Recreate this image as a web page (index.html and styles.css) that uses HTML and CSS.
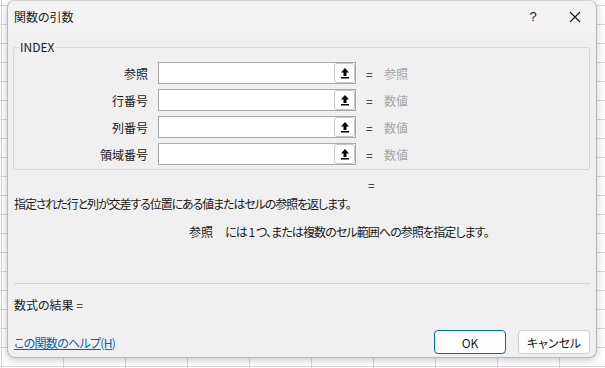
FILE: index.html
```
<!DOCTYPE html>
<html lang="ja">
<head>
<meta charset="utf-8">
<title>関数の引数</title>
<link rel="stylesheet" href="styles.css">
</head>
<body>
<div class="dialog">
	<div class="titlebar">
		<span class="title">関数の引数</span>
		<span class="help">?</span>
		<span class="close"><svg width="12" height="12" viewBox="0 0 12 12"><path d="M1 1L11 11M11 1L1 11" stroke="#1a1a1a" stroke-width="1.1" fill="none"/></svg></span>
	</div>
	<div class="content">
		<fieldset class="group">
			<legend>INDEX</legend>
			<div class="row">
				<label>参照</label>
				<div class="field"><span class="pick"><svg width="10" height="12" viewBox="0 0 10 12"><path d="M5 1L1 5.5H3.5V9H6.5V5.5H9Z" fill="#000"/><rect x="1" y="10" width="8" height="1.5" fill="#000"/></svg></span></div>
				<span class="eq">=</span>
				<span class="val">参照</span>
			</div>
			<div class="row">
				<label>行番号</label>
				<div class="field"><span class="pick"><svg width="10" height="12" viewBox="0 0 10 12"><path d="M5 1L1 5.5H3.5V9H6.5V5.5H9Z" fill="#000"/><rect x="1" y="10" width="8" height="1.5" fill="#000"/></svg></span></div>
				<span class="eq">=</span>
				<span class="val">数値</span>
			</div>
			<div class="row">
				<label>列番号</label>
				<div class="field"><span class="pick"><svg width="10" height="12" viewBox="0 0 10 12"><path d="M5 1L1 5.5H3.5V9H6.5V5.5H9Z" fill="#000"/><rect x="1" y="10" width="8" height="1.5" fill="#000"/></svg></span></div>
				<span class="eq">=</span>
				<span class="val">数値</span>
			</div>
			<div class="row">
				<label>領域番号</label>
				<div class="field"><span class="pick"><svg width="10" height="12" viewBox="0 0 10 12"><path d="M5 1L1 5.5H3.5V9H6.5V5.5H9Z" fill="#000"/><rect x="1" y="10" width="8" height="1.5" fill="#000"/></svg></span></div>
				<span class="eq">=</span>
				<span class="val">数値</span>
			</div>
		</fieldset>
		<div class="result-eq">=</div>
		<p class="desc">指定された行と列が交差する位置にある値またはセルの参照を返します。</p>
		<p class="arg"><span class="argname">参照</span><span class="argtext">には 1 つ、または複数のセル範囲への参照を指定します。</span></p>
		<div class="sep"></div>
		<div class="formula">数式の結果 =</div>
		<div class="footer">
			<span class="helpcell"><a href="#" class="helplink">この関数のヘルプ(H)</a></span>
			<button class="btn ok">OK</button>
			<button class="btn">キャンセル</button>
		</div>
	</div>
</div>
</body>
</html>
```
FILE: styles.css
```
html, body {margin:0px;padding:0px;height:100%;}
body {
	background-color:#fff;
	background-image:linear-gradient(to right, #d6d6d6 1px, transparent 1px), linear-gradient(to bottom, #d6d6d6 1px, transparent 1px);
	background-size:62px 100%, 100% 19px;
	background-position:1px 0, 0 5px;
	font-family:"Noto Sans CJK JP", "Noto Sans", sans-serif;
	font-size:12px;
	font-feature-settings:"palt";
	color:#1a1a1a;
}
.dialog {
	width:588px;height:356px;margin:0 0 0 7px;
	background:#f0f0f0;border:1px solid #b8b8b8;border-top-color:#d0d0d0;
	border-radius:8px;box-shadow:0 2px 8px rgba(0,0,0,0.22);
	display:flex;flex-direction:column;overflow:hidden;
}
.titlebar {height:31px;background:#f3f3f3;display:flex;align-items:center;padding:0 0 0 6px;flex-shrink:0;}
.title {flex:1;font-size:12px;line-height:16px;margin-top:1px;}
.help {width:30px;text-align:center;font-family:"Liberation Sans", sans-serif;font-size:13px;margin-right:12px;}
.close {width:30px;height:31px;display:flex;align-items:center;justify-content:center;margin-right:6px;}
.content {padding:0 6px 0 5px;display:flex;flex-direction:column;flex:1;}
.group {margin:7px 0 0 0;padding:7px 0 4px 0;border:1px solid #dadada;border-radius:2px;min-width:0;}
.group legend {padding:0 1px;margin-left:5px;line-height:16px;font-size:12px;}
.row {display:flex;align-items:center;height:22px;margin-bottom:5px;}
.row:last-child {margin-bottom:0;}
.row label {width:134px;text-align:right;margin-right:10px;}
.field {width:196px;height:20px;border:1px solid #a8a8a8;background:#fff;display:flex;justify-content:flex-end;align-items:center;}
.pick {width:19px;height:18px;border:1px solid #c6c6c6;border-radius:3px;background:#fff;display:flex;align-items:center;justify-content:center;}
.eq {margin-left:10px;width:18px;}
.val {color:#a6a6a6;}
.result-eq {margin:7px 0 0 355px;line-height:16px;}
.desc {margin:3px 0 0 1px;line-height:16px;letter-spacing:-1.1px;}
.arg {margin:12px 0 0 176px;line-height:16px;}
.argname {margin-right:12px;}
.argtext {letter-spacing:-0.9px;}
.sep {height:1px;background:#d6d6d6;margin:43px 0 0 1px;}
.formula {margin:13px 0 0 1px;line-height:16px;}
.footer {display:flex;align-items:center;margin-top:17px;}
.helpcell {flex:1;margin-left:1px;}
.helplink {color:#0063b1;text-decoration:underline;letter-spacing:-0.7px;}
.btn {
	width:72px;height:24px;border:1px solid #d0d0d0;border-radius:4px;background:#fdfdfd;
	font-family:"Noto Sans CJK JP", "Noto Sans", sans-serif;font-size:12px;font-feature-settings:"palt";color:#1a1a1a;padding:0;margin-left:12px;
}
.btn.ok {border-color:#0067c0;margin-left:0;}
```
